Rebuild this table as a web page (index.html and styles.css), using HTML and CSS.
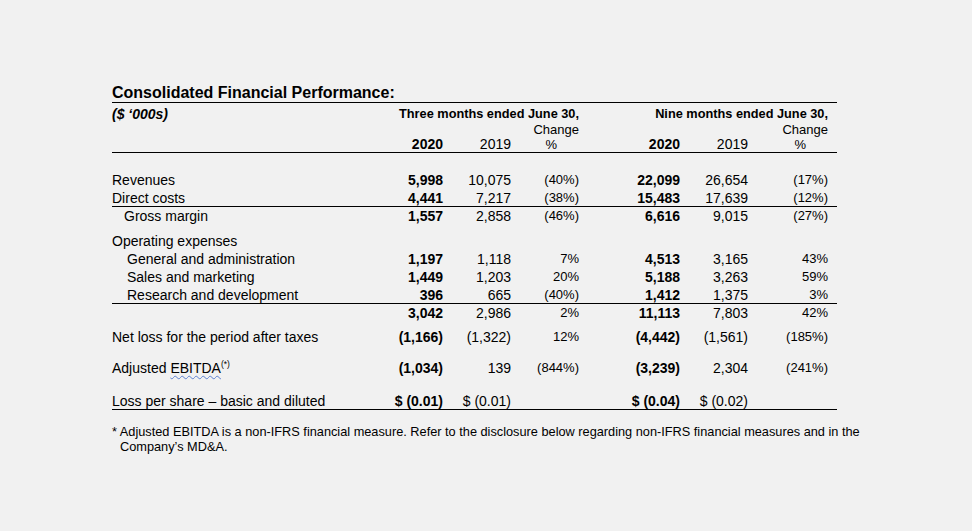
FILE: index.html
```html
<!DOCTYPE html>
<html>
<head>
<meta charset="utf-8">
<link rel="stylesheet" href="styles.css">
</head>
<body>
<div class="doc">
  <div class="title">Consolidated Financial Performance:</div>
  <div class="head">
    <div class="row h1">
      <div class="unit">($ ‘000s)</div>
      <div class="period pa">Three months ended June 30,</div>
      <div class="period pb">Nine months ended June 30,</div>
    </div>
    <div class="row h2">
      <div class="c3 chg">Change</div>
      <div class="c6 chg">Change</div>
    </div>
    <div class="row h3">
      <div class="c1 b">2020</div>
      <div class="c2">2019</div>
      <div class="c3 pct">%</div>
      <div class="c4 b">2020</div>
      <div class="c5">2019</div>
      <div class="c6 pct">%</div>
    </div>
  </div>
  <div class="body">
    <div class="row first">
      <div class="lbl">Revenues</div>
      <div class="c1 b">5,998</div><div class="c2">10,075</div><div class="c3 p">(40%)</div>
      <div class="c4 b">22,099</div><div class="c5">26,654</div><div class="c6 p">(17%)</div>
    </div>
    <div class="row ruled">
      <div class="lbl">Direct costs</div>
      <div class="c1 b">4,441</div><div class="c2">7,217</div><div class="c3 p">(38%)</div>
      <div class="c4 b">15,483</div><div class="c5">17,639</div><div class="c6 p">(12%)</div>
    </div>
    <div class="row">
      <div class="lbl in1">Gross margin</div>
      <div class="c1 b">1,557</div><div class="c2">2,858</div><div class="c3 p">(46%)</div>
      <div class="c4 b">6,616</div><div class="c5">9,015</div><div class="c6 p">(27%)</div>
    </div>
    <div class="row opex">
      <div class="lbl">Operating expenses</div>
    </div>
    <div class="row">
      <div class="lbl in2">General and administration</div>
      <div class="c1 b">1,197</div><div class="c2">1,118</div><div class="c3 p">7%</div>
      <div class="c4 b">4,513</div><div class="c5">3,165</div><div class="c6 p">43%</div>
    </div>
    <div class="row">
      <div class="lbl in2">Sales and marketing</div>
      <div class="c1 b">1,449</div><div class="c2">1,203</div><div class="c3 p">20%</div>
      <div class="c4 b">5,188</div><div class="c5">3,263</div><div class="c6 p">59%</div>
    </div>
    <div class="row ruled">
      <div class="lbl in2">Research and development</div>
      <div class="c1 b">396</div><div class="c2">665</div><div class="c3 p">(40%)</div>
      <div class="c4 b">1,412</div><div class="c5">1,375</div><div class="c6 p">3%</div>
    </div>
    <div class="row">
      <div class="lbl"></div>
      <div class="c1 b">3,042</div><div class="c2">2,986</div><div class="c3 p">2%</div>
      <div class="c4 b">11,113</div><div class="c5">7,803</div><div class="c6 p">42%</div>
    </div>
    <div class="row net">
      <div class="lbl">Net loss for the period after taxes</div>
      <div class="c1 b">(1,166)</div><div class="c2">(1,322)</div><div class="c3 p">12%</div>
      <div class="c4 b">(4,442)</div><div class="c5">(1,561)</div><div class="c6 p">(185%)</div>
    </div>
    <div class="row gap">
      <div class="lbl">Adjusted <span class="squig">EBITDA</span><sup>(*)</sup></div>
      <div class="c1 b">(1,034)</div><div class="c2">139</div><div class="c3 p">(844%)</div>
      <div class="c4 b">(3,239)</div><div class="c5">2,304</div><div class="c6 p">(241%)</div>
    </div>
    <div class="row gap ruled last">
      <div class="lbl">Loss per share – basic and diluted</div>
      <div class="c1 b">$ (0.01)</div><div class="c2">$ (0.01)</div><div class="c3 p"></div>
      <div class="c4 b">$ (0.04)</div><div class="c5">$ (0.02)</div><div class="c6 p"></div>
    </div>
  </div>
  <p class="note">* Adjusted EBITDA is a non-IFRS financial measure. Refer to the disclosure below regarding non-IFRS financial measures and in the Company’s MD&amp;A.</p>
</div>
</body>
</html>
```

FILE: styles.css
```css
html, body {
  margin: 0;
  padding: 0;
  background: #f1f1f1;
}
body {
  font-family: "Liberation Sans", Arial, sans-serif;
  color: #000;
  font-size: 14px;
}
.doc {
  width: 725px;
  margin-left: 112px;
  padding-top: 83px;
}
.title {
  font-size: 16px;
  font-weight: bold;
  line-height: 19px;
  border-bottom: 1px solid #000;
}
.row {
  display: grid;
  grid-template-columns: 278px 53px 68px 68px 101px 68px 80px 9px;
  line-height: 18px;
  height: 18px;
}
.row > div { white-space: nowrap; }
.c1 { grid-column: 2; text-align: right; }
.c2 { grid-column: 3; text-align: right; }
.c3 { grid-column: 4; text-align: right; }
.c4 { grid-column: 5; text-align: right; }
.c5 { grid-column: 6; text-align: right; }
.c6 { grid-column: 7; text-align: right; }
.lbl { grid-column: 1; }
.b { font-weight: bold; }
.p { font-size: 13px; }

.head {
  padding-top: 3px;
  border-bottom: 1px solid #000;
}
.head .row { line-height: 16px; height: 16px; }
.head .row.h2 { height: 15px; line-height: 15px; }
.head .row.h3 { height: 15px; line-height: 15px; }
.unit {
  grid-column: 1;
  font-weight: bold;
  font-style: italic;
}
.period {
  font-size: 12.75px;
  font-weight: bold;
  text-align: right;
}
.pa { grid-column: 2 / 5; }
.pb { grid-column: 5 / 8; }
.chg { font-size: 13px; }
.pct { font-size: 13px; padding-right: 22px; }

.body .first { margin-top: 18px; }
.row.ruled { height: 17px; border-bottom: 1px solid #000; }
.in1 { padding-left: 12px; }
.in2 { padding-left: 15px; }
.row.opex { margin-top: 7px; }
.row.net { margin-top: 6px; }
.row.gap { margin-top: 13px; }
.row.last { margin-top: 15px; }
sup {
  font-size: 8.5px;
  line-height: 0;
  vertical-align: 6px;
}
.squig {
  text-decoration: underline wavy #5b7fd1;
  text-decoration-thickness: 1px;
  text-underline-offset: 2px;
}
.note {
  width: 760px;
  margin: 14px 0 0;
  font-size: 12.75px;
  line-height: 15px;
  padding-left: 8px;
  text-indent: -8px;
}
```
